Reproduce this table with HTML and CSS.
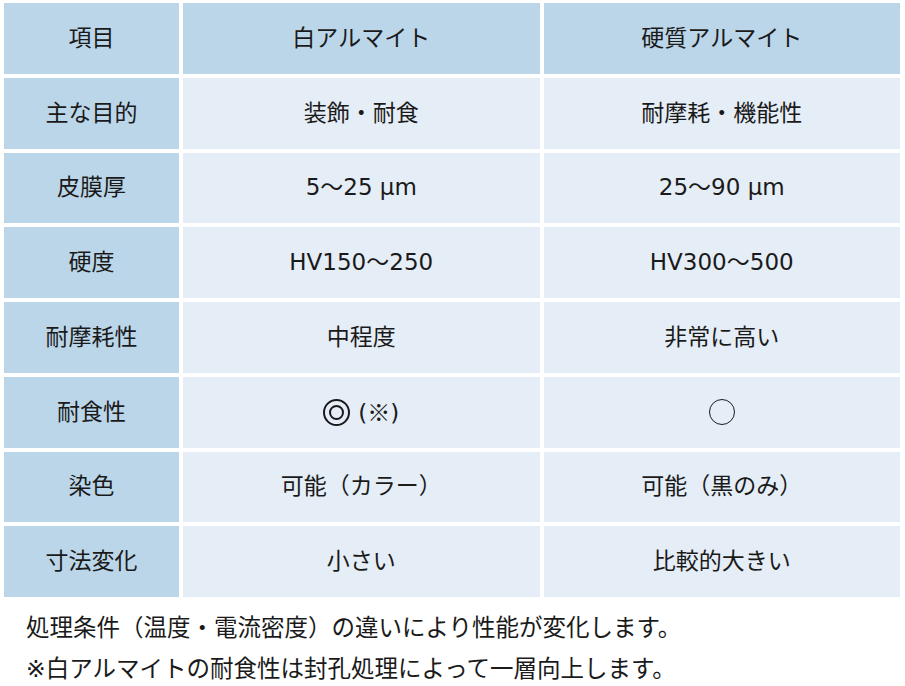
FILE: index.html
```html
<!DOCTYPE html>
<html lang="ja">
<head>
<meta charset="utf-8">
<link rel="stylesheet" href="styles.css">
</head>
<body>
<div class="table">
  <div class="cell head">項目</div>
  <div class="cell head">白アルマイト</div>
  <div class="cell head">硬質アルマイト</div>

  <div class="cell label">主な目的</div>
  <div class="cell">装飾・耐食</div>
  <div class="cell">耐摩耗・機能性</div>

  <div class="cell label">皮膜厚</div>
  <div class="cell">5〜25 μm</div>
  <div class="cell">25〜90 μm</div>

  <div class="cell label">硬度</div>
  <div class="cell">HV150〜250</div>
  <div class="cell">HV300〜500</div>

  <div class="cell label">耐摩耗性</div>
  <div class="cell">中程度</div>
  <div class="cell">非常に高い</div>

  <div class="cell label">耐食性</div>
  <div class="cell"><span class="double" aria-label="◎"><span class="inner"></span></span><span class="mark">(<span class="kome">※</span>)</span></div>
  <div class="cell"><span class="single" aria-label="○"></span></div>

  <div class="cell label">染色</div>
  <div class="cell">可能（カラー）</div>
  <div class="cell">可能（黒のみ）</div>

  <div class="cell label">寸法変化</div>
  <div class="cell">小さい</div>
  <div class="cell">比較的大きい</div>
</div>
<div class="notes">
  <p>処理条件（温度・電流密度）の違いにより性能が変化します。</p>
  <p>※白アルマイトの耐食性は封孔処理によって一層向上します。</p>
</div>
</body>
</html>
```

FILE: styles.css
```css
html, body {
  margin: 0;
  padding: 0;
  background: #ffffff;
}
body {
  font-family: "DejaVu Sans", "Noto Sans CJK JP", sans-serif;
  color: #1a1a1a;
  width: 905px;
  height: 686px;
  overflow: hidden;
}
.table {
  display: grid;
  grid-template-columns: 175px 356.5px 356.5px;
  grid-auto-rows: 70.75px;
  gap: 4px;
  padding: 3px 4px 0 4px;
}
.cell {
  display: flex;
  align-items: center;
  justify-content: center;
  background: #e5edf6;
  font-size: 23px;
  line-height: 1;
}
.cell.head, .cell.label {
  background: #bcd6e9;
}
.double {
  box-sizing: border-box;
  width: 27px;
  height: 27px;
  border: 2.2px solid #1a1a1a;
  border-radius: 50%;
  display: flex;
  align-items: center;
  justify-content: center;
  margin-right: 8px;
}
.double .inner {
  box-sizing: border-box;
  width: 15px;
  height: 15px;
  border: 2.2px solid #1a1a1a;
  border-radius: 50%;
}
.mark {
  font-size: 23px;
}
.kome {
  font-family: "Noto Sans CJK JP", sans-serif;
}
.single {
  box-sizing: border-box;
  width: 26px;
  height: 26px;
  border: 1.6px solid #1a1a1a;
  border-radius: 50%;
}
.notes {
  padding: 11px 0 0 26px;
}
.notes p {
  margin: 0;
  font-size: 23.5px;
  line-height: 40.5px;
}
```
